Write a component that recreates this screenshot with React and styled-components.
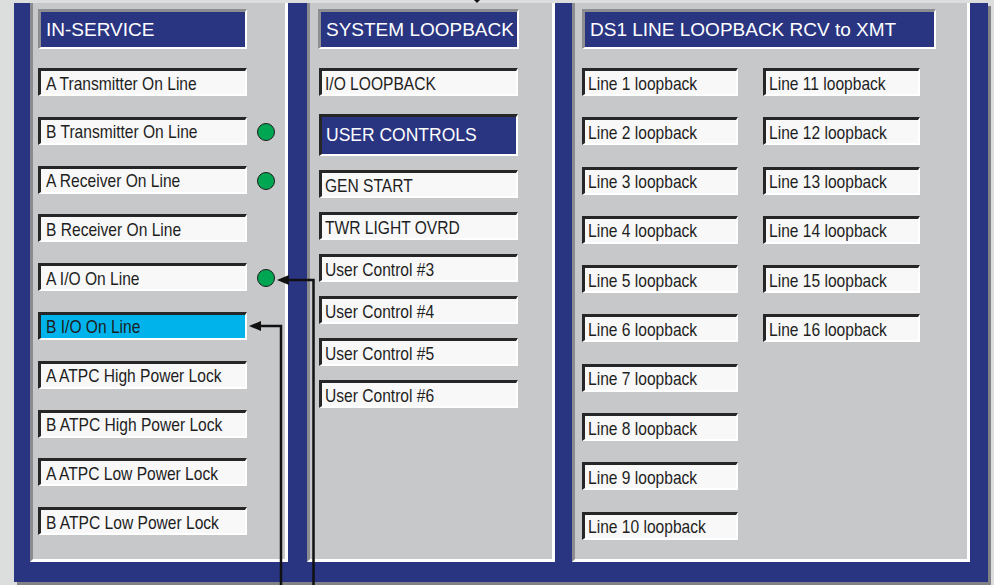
import React from 'react';
import styled, { createGlobalStyle } from 'styled-components';

const GlobalStyle = createGlobalStyle`
  html, body {
    margin: 0;
    padding: 0;
    background: #dcdddd;
  }
  body {
    font-family: "Liberation Sans", Arial, sans-serif;
  }
`;

const NAVY = '#2a3582';

const inService = [
  { label: 'A Transmitter On Line' },
  { label: 'B Transmitter On Line', led: true },
  { label: 'A Receiver On Line', led: true },
  { label: 'B Receiver On Line' },
  { label: 'A I/O On Line', led: true },
  { label: 'B I/O On Line', active: true },
  { label: 'A ATPC High Power Lock' },
  { label: 'B ATPC High Power Lock' },
  { label: 'A ATPC Low Power Lock' },
  { label: 'B ATPC Low Power Lock' },
];

const userControls = [
  'GEN START',
  'TWR LIGHT OVRD',
  'User Control #3',
  'User Control #4',
  'User Control #5',
  'User Control #6',
];

const lines = Array.from({ length: 16 }, (_, i) => `Line ${i + 1} loopback`);

const App = () => {
  return (
    <>
      <GlobalStyle />
      <Page>
        <Frame>
          <Panel $w={258} $pl={5}>
            <TitleBox $w={209}>IN-SERVICE</TitleBox>
            <StatusList>
              {inService.map((row) => (
                <React.Fragment key={row.label}>
                  <Field $active={row.active} $pad={5}>
                    <Narrow>{row.label}</Narrow>
                  </Field>
                  <LedCell>{row.led && <Led />}</LedCell>
                </React.Fragment>
              ))}
            </StatusList>
          </Panel>

          <Panel $w={248} $pl={8} $gap={19}>
            <TitleBox $w={201}>SYSTEM LOOPBACK</TitleBox>
            <Column>
              <Field $w={199}><Narrow>I/O LOOPBACK</Narrow></Field>
              <SectionHead>USER CONTROLS</SectionHead>
              <ControlList>
                {userControls.map((c) => (
                  <Field key={c} $w={199}><Narrow>{c}</Narrow></Field>
                ))}
              </ControlList>
            </Column>
          </Panel>

          <Panel $w={398} $pl={7} $gap={17}>
            <TitleBox $w={354}>DS1 LINE LOOPBACK RCV to XMT</TitleBox>
            <LineGrid>
              {lines.map((l) => (
                <Field key={l}><Narrow>{l}</Narrow></Field>
              ))}
            </LineGrid>
          </Panel>
        </Frame>

        <Wires width="994" height="585" viewBox="0 0 994 585">
          <polygon points="474,0 480,0 477,3" fill="#111" />
          <polyline points="313.5,585 313.5,280 287,280" fill="none" stroke="#111" strokeWidth="2.5" />
          <polygon points="277,280 289,275 289,285" fill="#111" />
          <polyline points="281,585 281,326 259,326" fill="none" stroke="#111" strokeWidth="2.5" />
          <polygon points="249,326 261,321 261,331" fill="#111" />
        </Wires>
      </Page>
    </>
  );
};

const Page = styled.div`
  position: relative;
  width: 994px;
  height: 585px;
  overflow: hidden;
  box-sizing: border-box;
  padding: 3px 0 0 14px;
  background: #dcdddd;
`;

const Frame = styled.div`
  width: 974px;
  height: 579px;
  box-sizing: border-box;
  display: flex;
  padding: 0 18px 20px 16px;
  background: ${NAVY};
  box-shadow: 3px 3px 0 #808285;
`;

const Panel = styled.div`
  width: ${(p) => p.$w}px;
  height: 100%;
  flex-shrink: 0;
  box-sizing: border-box;
  margin-left: ${(p) => p.$gap || 0}px;
  padding: 6px 0 0 ${(p) => p.$pl}px;
  background: #c7c8ca;
  border-left: 3px solid #8a8c8f;
  border-right: 3px solid #ffffff;
  border-bottom: 3px solid #ffffff;
`;

const TitleBox = styled.div`
  width: ${(p) => p.$w}px;
  height: 40px;
  box-sizing: border-box;
  display: flex;
  align-items: center;
  padding-left: 5px;
  overflow: hidden;
  white-space: nowrap;
  background: ${NAVY};
  color: #ffffff;
  font-size: 19px;
  border-top: 3px solid #8d8e91;
  border-left: 3px solid #8d8e91;
  border-right: 2px solid #ffffff;
  border-bottom: 2px solid #ffffff;
`;

const Field = styled.div`
  width: ${(p) => (p.$w ? `${p.$w}px` : 'auto')};
  margin-left: ${(p) => (p.$w ? '1px' : '0')};
  height: 28px;
  box-sizing: border-box;
  display: flex;
  align-items: center;
  padding-left: ${(p) => p.$pad || 3}px;
  white-space: nowrap;
  font-size: 19px;
  color: #1e1e1e;
  background: ${(p) => (p.$active ? '#00b4eb' : '#f8f8f8')};
  border-top: 3px solid #262626;
  border-left: 3px solid #262626;
  border-right: 2px solid #ffffff;
  border-bottom: 2px solid #ffffff;
`;

/* the reference uses a condensed face; squeeze the regular one */
const Narrow = styled.span`
  display: inline-block;
  transform: scaleX(0.82);
  transform-origin: left center;
  margin-top: 2px;
`;

const StatusList = styled.div`
  display: grid;
  grid-template-columns: 209px 38px;
  grid-auto-rows: 28px;
  row-gap: 20.8px;
  margin-top: 19px;
`;

const LedCell = styled.div`
  display: flex;
  align-items: center;
  justify-content: center;
`;

const Led = styled.span`
  width: 18px;
  height: 18px;
  box-sizing: border-box;
  border-radius: 50%;
  background: #00a651;
  border: 1.5px solid #1d1d1d;
  margin-top: 2px;
`;

const Column = styled.div`
  display: flex;
  flex-direction: column;
  margin-top: 19px;
`;

const SectionHead = styled.div`
  width: 199px;
  margin: 18px 0 14px 1px;
  height: 42px;
  box-sizing: border-box;
  display: flex;
  align-items: center;
  padding-left: 4px;
  white-space: nowrap;
  background: ${NAVY};
  color: #ffffff;
  font-size: 17.5px;
  border-top: 3px solid #262626;
  border-left: 3px solid #262626;
  border-right: 2px solid #ffffff;
  border-bottom: 2px solid #ffffff;
`;

const ControlList = styled.div`
  display: flex;
  flex-direction: column;
  gap: 14px;
`;

const LineGrid = styled.div`
  display: grid;
  grid-template-columns: 156px 157px;
  grid-template-rows: repeat(10, 28px);
  grid-auto-flow: column;
  column-gap: 25px;
  row-gap: 21.3px;
  margin-top: 19px;
`;

const Wires = styled.svg`
  position: absolute;
  top: 0;
  left: 0;
  pointer-events: none;
`;

export default App;
